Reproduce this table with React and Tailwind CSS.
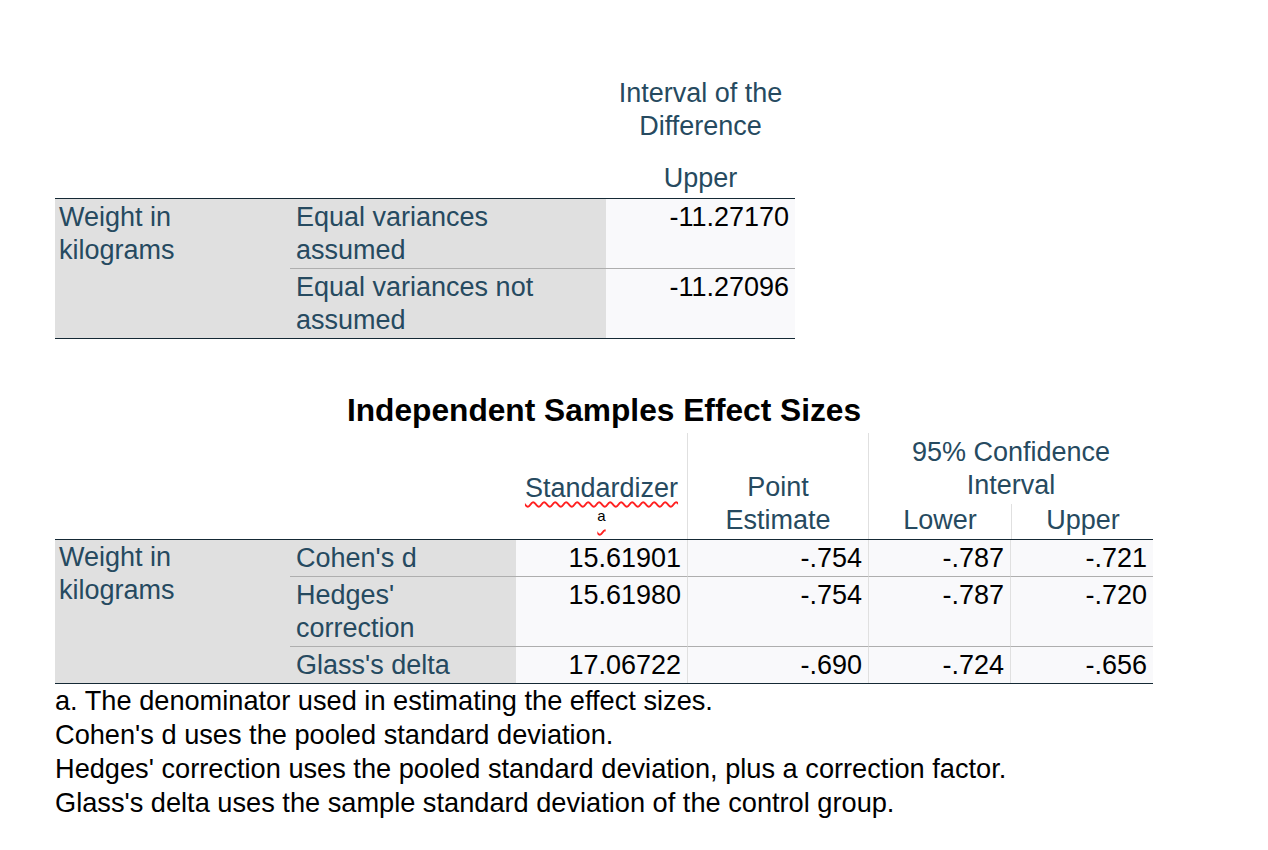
import React from "react";

const label = "text-[#264a60]";
const num = "text-black text-right pr-[6px]";

const EFFECT_ROWS = [
  { name: "Cohen's d", std: "15.61901", point: "-.754", lower: "-.787", upper: "-.721" },
  { name: "Hedges' correction", std: "15.61980", point: "-.754", lower: "-.787", upper: "-.720" },
  { name: "Glass's delta", std: "17.06722", point: "-.690", lower: "-.724", upper: "-.656" },
];

const NOTES = [
  "a. The denominator used in estimating the effect sizes.",
  "Cohen's d uses the pooled standard deviation.",
  "Hedges' correction uses the pooled standard deviation, plus a correction factor.",
  "Glass's delta uses the sample standard deviation of the control group.",
];

const TopTable = () => (
  <div className="w-[740px]">
    {/* header */}
    <div className="grid grid-cols-[551px_189px] pt-[77px]">
      <div></div>
      <div className={`${label} text-center pb-[3px]`}>
        <div>Interval of the</div>
        <div>Difference</div>
        <div className="mt-[19px]">Upper</div>
      </div>
    </div>
    <div className="grid grid-cols-[235px_316px_189px] grid-rows-[70px_69px] border-t border-b border-[#152935]">
      <div className={`row-span-2 bg-[#e0e0e0] pl-1 pt-[2px] ${label}`}>
        Weight in
        <br />
        kilograms
      </div>
      <div className={`bg-[#e0e0e0] pl-[6px] pt-[2px] border-b border-[#aeaeae] ${label}`}>
        Equal variances
        <br />
        assumed
      </div>
      <div className={`bg-[#f9f9fb] pt-[2px] border-b border-[#aeaeae] ${num}`}>-11.27170</div>
      <div className={`bg-[#e0e0e0] pl-[6px] pt-[2px] ${label}`}>
        Equal variances not
        <br />
        assumed
      </div>
      <div className={`bg-[#f9f9fb] pt-[2px] ${num}`}>-11.27096</div>
    </div>
  </div>
);

const EffectTable = () => (
  <div className="w-[1098px] mt-[54px]">
    <div className="text-center text-black font-bold text-[31.7px] leading-[34px]">
      Independent Samples Effect Sizes
    </div>
    {/* header */}
    <div className={`grid grid-cols-[235px_226px_171px_181px_285px] h-[106px] mt-[6px] ${label}`}>
      <div></div>
      <div></div>
      <div className="flex flex-col justify-end items-center pb-[12px]">
        <div className="underline decoration-wavy decoration-[#ff2020] decoration-[1.5px] underline-offset-[4px]">
          Standardizer
        </div>
        <div className="text-black text-[15px] leading-[22px] underline decoration-wavy decoration-[#ff2020] decoration-[1.5px] underline-offset-[8px]">
          a
        </div>
      </div>
      <div className="flex flex-col justify-end items-center pb-[2px] border-l border-[#e0e0e0]">
        <div>Point</div>
        <div>Estimate</div>
      </div>
      <div className="flex flex-col justify-end border-l border-[#e0e0e0]">
        <div className="text-center">
          <div>95% Confidence</div>
          <div>Interval</div>
        </div>
        <div className="grid grid-cols-[142px_143px] mt-[2px]">
          <div className="text-center pb-[2px]">Lower</div>
          <div className="text-center pb-[2px] border-l border-[#e0e0e0]">Upper</div>
        </div>
      </div>
    </div>
    {/* body */}
    <div className="grid grid-cols-[235px_226px_171px_181px_142px_143px] grid-rows-[37px_70px_36px] border-t border-b border-[#152935]">
      <div className={`row-span-3 bg-[#e0e0e0] pl-1 pt-px ${label}`}>
        Weight in
        <br />
        kilograms
      </div>
      {EFFECT_ROWS.map((row, i) => {
        const line = i < 2 ? "border-b border-[#aeaeae]" : "";
        return (
          <React.Fragment key={row.name}>
            <div className={`bg-[#e0e0e0] pl-[6px] pt-[2px] pr-2 ${line} ${label}`}>{row.name}</div>
            <div className={`bg-[#f9f9fb] pt-[2px] ${line} ${num} pr-[5px]`}>{row.std}</div>
            <div className={`bg-[#f9f9fb] pt-[2px] border-l border-l-[#e0e0e0] ${line} ${num}`}>{row.point}</div>
            <div className={`bg-[#f9f9fb] pt-[2px] border-l border-l-[#e0e0e0] ${line} ${num} pr-[5px]`}>{row.lower}</div>
            <div className={`bg-[#f9f9fb] pt-[2px] border-l border-l-[#e0e0e0] ${line} ${num}`}>{row.upper}</div>
          </React.Fragment>
        );
      })}
    </div>
    <div className="text-black text-[27.2px] leading-[34px]">
      {NOTES.map((n) => (
        <div key={n}>{n}</div>
      ))}
    </div>
  </div>
);

export default function App() {
  return (
    <div className="w-[1268px] h-[850px] bg-white pl-[55px] font-['Liberation_Sans',Arial,sans-serif] text-[27px] leading-[33px]">
      <TopTable />
      <EffectTable />
    </div>
  );
}
